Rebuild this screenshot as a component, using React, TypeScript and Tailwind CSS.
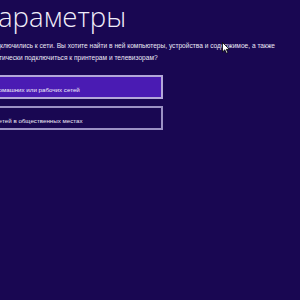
import React from "react";

function Cut({ hidden, visible, className = "" }: { hidden: string; visible: string; className?: string }) {
  return (
    <div className={`flex whitespace-nowrap ${className}`}>
      <span className="flex w-0 justify-end overflow-visible">
        <span className="whitespace-nowrap">{hidden}</span>
      </span>
      <span>{visible}</span>
    </div>
  );
}

export default function App() {
  return (
    <div
      className="relative w-[300px] h-[300px] overflow-hidden bg-[#190752] text-[#f1eefa]"
      style={{ fontFamily: '"Open Sans", "Noto Sans", sans-serif' }}
    >
      <div className="flex flex-col">
        <Cut
          hidden="П"
          visible="араметры"
          className="h-[32px] text-[27.6px] font-light leading-[32px] ml-[-2px]"
        />
        <div
          className="mt-[8px] flex flex-col text-[6.6px] leading-[12px] text-[#ece8f6]"
          style={{ fontFamily: '"Liberation Sans", Arial, sans-serif' }}
        >
          <Cut hidden="Вы подк" visible="лючились к сети. Вы хотите найти в ней компьютеры, устройства и содержимое, а также" className="pl-[3px]" />
          <Cut hidden="автомат" visible="ически подключиться к принтерам и телевизорам?" className="pl-[2px]" />
        </div>
        <div
          className="mt-[11px] flex w-[167px] h-[24px] items-end pb-[2px] ml-[-4px] border-2 border-[#b3a8d9] bg-[#4a1bb3] text-[6.2px] leading-[10px] text-[#f1eefa]"
          style={{ fontFamily: '"Liberation Sans", Arial, sans-serif' }}
        >
          <Cut hidden="Для до" visible="машних или рабочих сетей" className="pl-[4px]" />
        </div>
        <div
          className="mt-[7px] flex w-[167px] h-[24px] items-end pb-[2px] ml-[-4px] border-2 border-[#9b91c4] text-[6.2px] leading-[10px] text-[#ece8f6]"
          style={{ fontFamily: '"Liberation Sans", Arial, sans-serif' }}
        >
          <Cut hidden="Для се" visible="тей в общественных местах" className="pl-[4px]" />
        </div>
      </div>
      <svg className="absolute left-[222px] top-[42px]" width="8" height="12" viewBox="0 0 8 12">
        <path d="M0.5 0.5 L0.5 10 L2.8 7.8 L4.4 11.3 L5.8 10.7 L4.3 7.3 L7.3 7.3 Z" fill="#ffffff" stroke="#000000" strokeWidth="0.8" />
      </svg>
    </div>
  );
}
